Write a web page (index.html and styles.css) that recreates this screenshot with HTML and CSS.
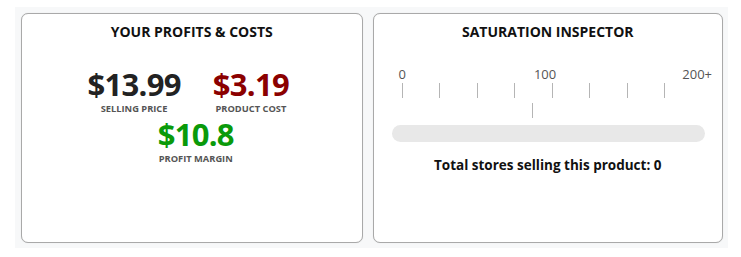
FILE: index.html
```html
<!DOCTYPE html>
<html>
<head>
<meta charset="utf-8">
<link rel="stylesheet" href="styles.css">
</head>
<body>
<div class="wrap">
  <section class="card card-profit">
    <h2 class="card-title">YOUR PROFITS &amp; COSTS</h2>
    <div class="stats">
      <div class="stat stat-price">
        <div class="stat-value val-dark">$13.99</div>
        <div class="stat-label">SELLING PRICE</div>
      </div>
      <div class="stat stat-cost">
        <div class="stat-value val-red">$3.19</div>
        <div class="stat-label">PRODUCT COST</div>
      </div>
      <div class="stat stat-margin">
        <div class="stat-value val-green">$10.8</div>
        <div class="stat-label">PROFIT MARGIN</div>
      </div>
    </div>
  </section>
  <section class="card card-sat">
    <h2 class="card-title">SATURATION INSPECTOR</h2>
    <div class="scale-labels">
      <span class="lbl lbl-0">0</span>
      <span class="lbl lbl-100">100</span>
      <span class="lbl lbl-200">200+</span>
    </div>
    <div class="ticks">
      <span class="tick"></span><span class="tick"></span><span class="tick"></span><span class="tick"></span>
      <span class="tick"></span><span class="tick"></span><span class="tick"></span><span class="tick"></span>
    </div>
    <div class="marker-row"><span class="marker"></span></div>
    <div class="bar"></div>
    <p class="total">Total stores selling this product: 0</p>
  </section>
</div>
</body>
</html>
```
FILE: styles.css
```css
html, body {
  margin: 0;
  padding: 0;
  background: #ffffff;
}
body {
  font-family: "Open Sans", "Noto Sans", sans-serif;
  color: #111;
}
.wrap {
  margin: 7px 0 0 15px;
  width: 713px;
  height: 241px;
  box-sizing: border-box;
  padding: 6px 5px 5px 6px;
  background: #f7f8f9;
  display: flex;
  gap: 10px;
}
.card {
  box-sizing: border-box;
  height: 230px;
  background: #fff;
  border: 1px solid #a9a9a9;
  border-radius: 7px;
  box-shadow: 0 0 1px rgba(0,0,0,0.15);
}
.card-profit { width: 342px; }
.card-sat { width: 351px; }
.card-title {
  margin: 9px 0 0;
  text-align: center;
  font-size: 14px;
  font-weight: 700;
  line-height: 18px;
  color: #111;
}
.stats {
  display: flex;
  flex-wrap: wrap;
  justify-content: center;
  column-gap: 32px;
  row-gap: 4px;
  width: 250px;
  margin: 28px auto 0;
}
.stat {
  text-align: center;
}
.stat-cost { margin-right: 7px; }
.stat-margin { margin-left: 8px; }
.stat-value {
  font-size: 31px;
  font-weight: 700;
  line-height: 30px;
  letter-spacing: -0.7px;
}
.val-dark { color: #222; }
.val-red { color: #8b0000; }
.val-green { color: #0a9a0a; }
.stat-label {
  font-size: 9.3px;
  font-weight: 700;
  line-height: 12px;
  color: #555;
  margin-top: 4px;
}
.scale-labels {
  display: flex;
  margin-top: 25px;
  padding: 0 10px 0 25px;
  font-size: 13px;
  line-height: 16px;
  color: #555;
}
.lbl-100 { margin-left: 128px; }
.lbl-200 { margin-left: auto; }
.ticks {
  display: flex;
  margin: 1px 0 0 28px;
  height: 15px;
}
.tick {
  width: 37.5px;
  height: 15px;
  box-sizing: border-box;
  border-left: 1px solid #b5b5b5;
  flex: none;
}
.marker-row {
  margin: 5px 0 0 158px;
  height: 15px;
}
.marker {
  display: block;
  width: 1px;
  height: 15px;
  background: #b5b5b5;
}
.bar {
  margin: 7px 17px 0 18px;
  height: 17px;
  border-radius: 9px;
  background: #e8e8e8;
}
.total {
  margin: 14px 0 0;
  text-align: center;
  font-size: 13.5px;
  font-weight: 700;
  line-height: 18px;
  color: #111;
}
```
